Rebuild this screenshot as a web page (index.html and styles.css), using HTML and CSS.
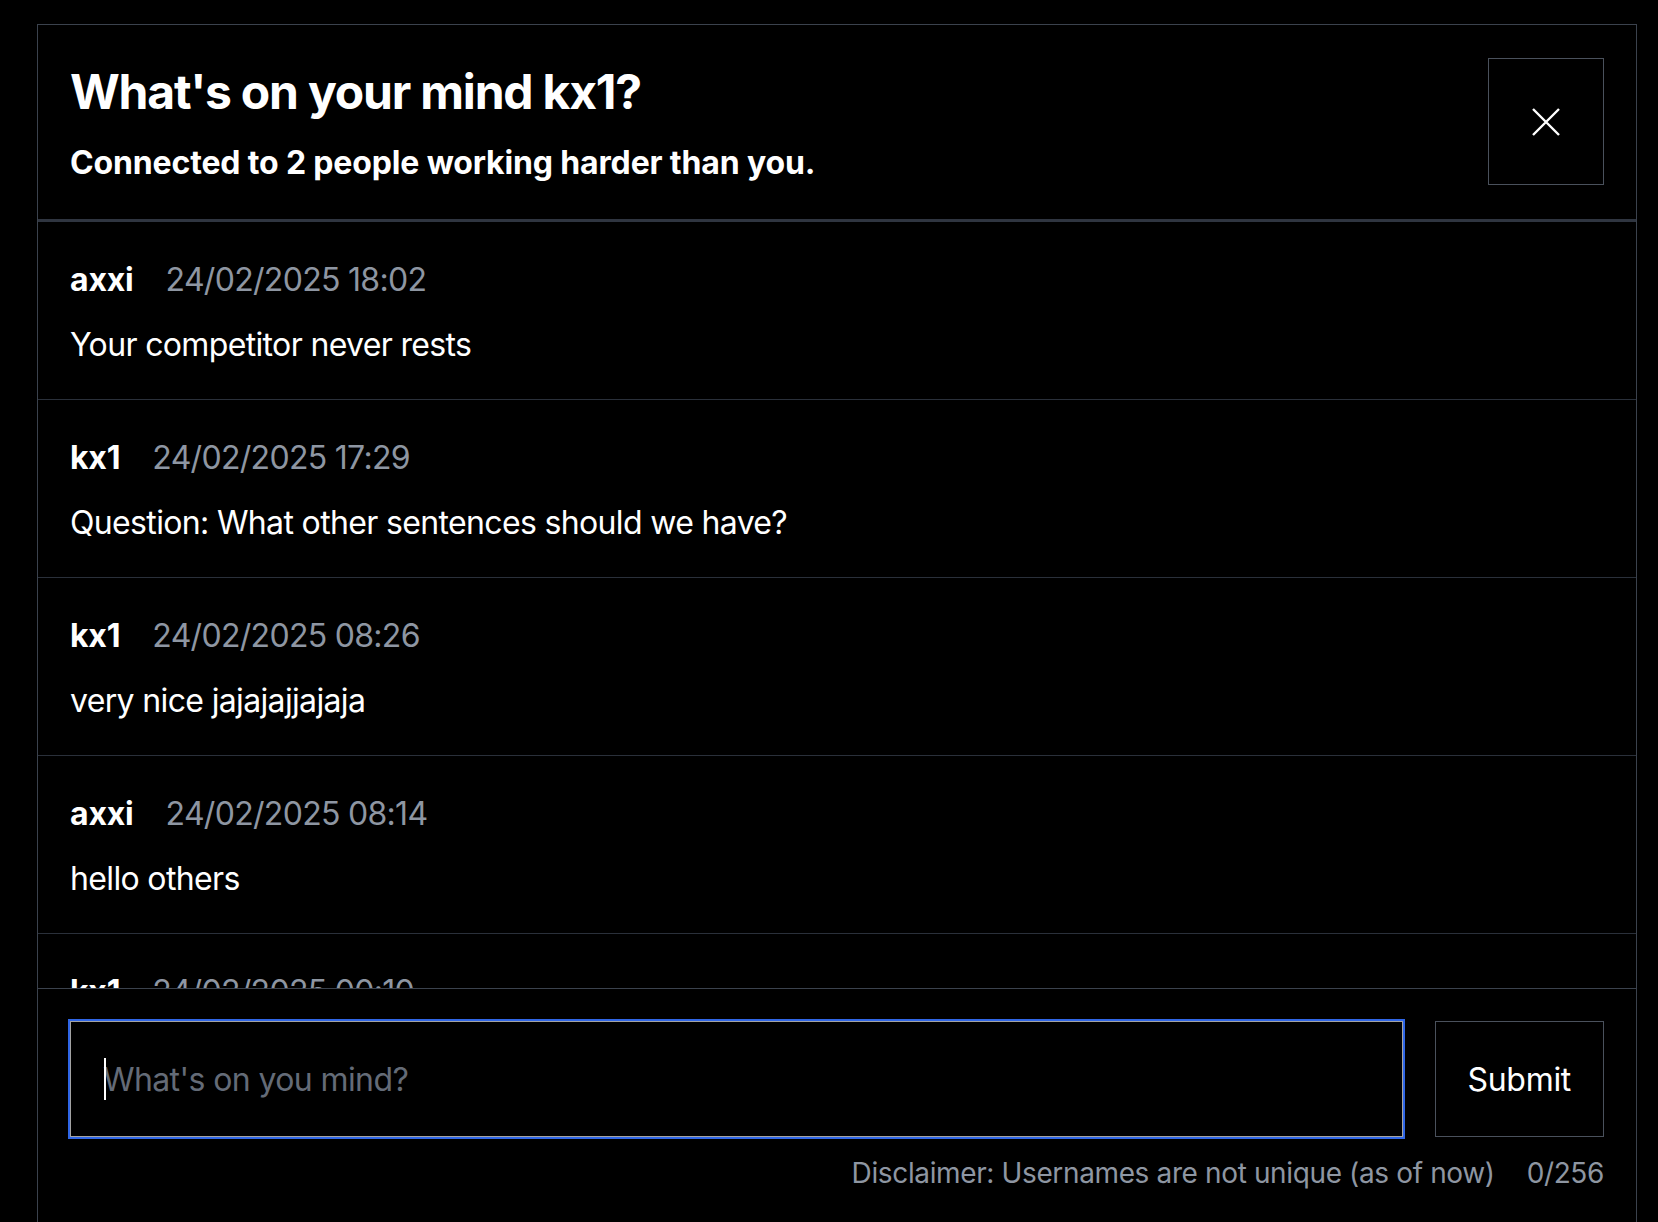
FILE: index.html
```html
<!DOCTYPE html>
<html>

<head>
    <title>What's on your mind</title>
    <link rel="stylesheet" href="styles.css">
</head>

<body>
    <div class="board">
        <div class="board-head">
            <div class="head-text">
                <h1 class="title">What's on your mind kx1?</h1>
                <p class="subtitle">Connected to 2 people working harder than you.</p>
            </div>
            <button class="close" title="Close">
                <svg width="28" height="28" viewBox="0 0 28 28" fill="none" stroke="#fff" stroke-width="2.4">
                    <path d="M1 1L27 27M27 1L1 27" />
                </svg>
            </button>
        </div>
        <ul class="messages">
            <li class="message">
                <div class="meta"><span class="name">axxi</span><span class="date">24/02/2025 18:02</span></div>
                <p class="text">Your competitor never rests</p>
            </li>
            <li class="message">
                <div class="meta"><span class="name">kx1</span><span class="date">24/02/2025 17:29</span></div>
                <p class="text">Question: What other sentences should we have?</p>
            </li>
            <li class="message">
                <div class="meta"><span class="name">kx1</span><span class="date">24/02/2025 08:26</span></div>
                <p class="text">very nice jajajajjajaja</p>
            </li>
            <li class="message">
                <div class="meta"><span class="name">axxi</span><span class="date">24/02/2025 08:14</span></div>
                <p class="text">hello others</p>
            </li>
            <li class="message">
                <div class="meta"><span class="name">kx1</span><span class="date">24/02/2025 00:10</span></div>
                <p class="text">hi</p>
            </li>
        </ul>
        <form class="composer">
            <div class="composer-row">
                <div class="field">
                    <textarea class="input" placeholder="What's on you mind?"></textarea>
                    <span class="caret"></span>
                </div>
                <button type="button" class="submit">Submit</button>
            </div>
            <div class="composer-foot">
                <span>Disclaimer: Usernames are not unique (as of now)</span>
                <span>0/256</span>
            </div>
        </form>
    </div>
</body>

</html>
```

FILE: styles.css
```css
html,
body {
    margin: 0;
    padding: 0;
    height: 100%;
    overflow: hidden;
    background-color: #000;
}

body {
    padding: 24px 0 0 37px;
    font-family: Inter, "Noto Sans", sans-serif;
    color: #fff;
}

.board {
    width: 1600px;
    box-sizing: border-box;
    border: 1px solid #3b424d;
    border-bottom: none;
}

.board-head {
    display: flex;
    justify-content: space-between;
    align-items: flex-start;
    padding: 33px 32px 34px 32px;
    border-bottom: 3px solid #2f3540;
}

.head-text {
    padding-top: 2px;
}

.title {
    margin: 0;
    font-size: 48px;
    line-height: 64px;
    font-weight: 700;
    letter-spacing: -1.2px;
}

.subtitle {
    margin: 17px 0 0;
    font-size: 32px;
    line-height: 44px;
    font-weight: 700;
    letter-spacing: -0.15px;
}

.close {
    width: 116px;
    height: 127px;
    padding: 0;
    display: flex;
    align-items: center;
    justify-content: center;
    background: #000;
    border: 1px solid #4a515c;
    cursor: pointer;
}

.messages {
    list-style: none;
    margin: 0;
    padding: 0;
    height: 766px;
    overflow: hidden;
}

.message {
    padding: 34px 32px 30px;
    border-bottom: 1px solid #2a303a;
}

.meta {
    display: flex;
    gap: 32px;
    font-size: 32px;
    line-height: 48px;
}

.name {
    font-weight: 700;
    letter-spacing: -0.2px;
}

.date {
    color: #8e96a2;
    letter-spacing: -0.7px;
}

.text {
    margin: 17px 0 0;
    font-size: 32px;
    line-height: 48px;
    letter-spacing: -0.65px;
}

.composer {
    border-top: 1px solid #3b424d;
    padding: 32px;
}

.composer-row {
    display: flex;
    gap: 32px;
}

.field {
    flex: 1;
    position: relative;
    display: flex;
}

.input {
    flex: 1;
    height: 116px;
    box-sizing: border-box;
    padding: 34px 32px 30px;
    resize: none;
    background: #000;
    color: #fff;
    border: 1px solid #a3a3a3;
    box-shadow: 0 0 0 2px #2f66e6;
    outline: none;
    font-family: Inter, "Noto Sans", sans-serif;
    font-size: 32px;
    line-height: 48px;
    letter-spacing: -0.6px;
}

.input::placeholder {
    color: #646b77;
}

/* 模拟输入框光标 */
.caret {
    position: absolute;
    left: 34px;
    top: 37px;
    width: 2px;
    height: 42px;
    background: #fff;
}

.submit {
    padding: 0 32px;
    background: #000;
    color: #fff;
    border: 1px solid #4a515c;
    font-family: Inter, "Noto Sans", sans-serif;
    font-size: 32px;
    letter-spacing: -0.3px;
    cursor: pointer;
}

.composer-foot {
    display: flex;
    justify-content: flex-end;
    gap: 32px;
    margin-top: 16px;
    font-size: 28px;
    line-height: 40px;
    color: #8e96a2;
    letter-spacing: -0.37px;
}
```
